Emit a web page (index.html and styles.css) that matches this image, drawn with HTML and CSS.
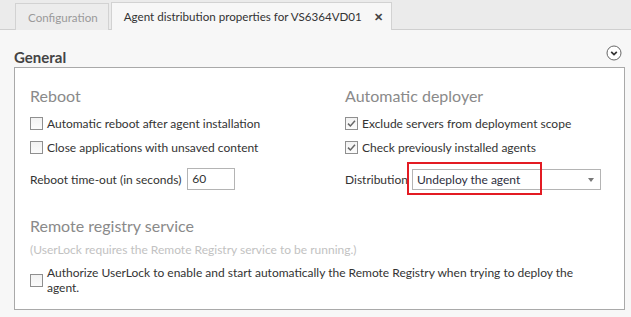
FILE: index.html
```html
<!DOCTYPE html>
<html lang="en">
  <head>
    <meta charset="UTF-8" />
    <title>Agent distribution properties</title>
    <link rel="stylesheet" href="styles.css">
  </head>
  <body>
    <div class="tabbar">
      <div class="tab">Configuration</div>
      <div class="tab active">
        Agent distribution properties for VS6364VD01
        <span class="close">&#x2715;</span>
      </div>
    </div>

    <div class="section-head">
      <h2>General</h2>
      <svg class="collapse" width="16" height="16" viewBox="0 0 16 16">
        <circle cx="8" cy="8" r="7" fill="#fff" stroke="#666" stroke-width="1" />
        <path d="M5.2 6.8 L8 9.6 L10.8 6.8" fill="none" stroke="#333" stroke-width="1.7" />
      </svg>
    </div>

    <div class="panel">
      <div class="columns">
        <div class="col">
          <h3>Reboot</h3>
          <label class="check-row"><span class="box"></span>Automatic reboot after agent installation</label>
          <label class="check-row"><span class="box"></span>Close applications with unsaved content</label>
          <div class="field-row">
            <span>Reboot time-out (in seconds)</span>
            <div class="textbox">60</div>
          </div>
        </div>
        <div class="col">
          <h3>Automatic deployer</h3>
          <label class="check-row">
            <span class="box">
              <svg width="11" height="11" viewBox="0 0 11 11"><path d="M2 5.6 L4.4 8 L9 2.8" fill="none" stroke="#666" stroke-width="1.5" /></svg>
            </span>Exclude servers from deployment scope
          </label>
          <label class="check-row">
            <span class="box">
              <svg width="11" height="11" viewBox="0 0 11 11"><path d="M2 5.6 L4.4 8 L9 2.8" fill="none" stroke="#666" stroke-width="1.5" /></svg>
            </span>Check previously installed agents
          </label>
          <div class="field-row">
            <span>Distribution</span>
            <div class="select-wrap">
              <div class="select">
                Undeploy the agent
                <span class="caret"></span>
              </div>
              <div class="highlight"></div>
            </div>
          </div>
        </div>
      </div>

      <h3 class="remote">Remote registry service</h3>
      <p class="note">(UserLock requires the Remote Registry service to be running.)</p>
      <label class="check-row wrap">
        <span class="box"></span>
        <span class="wrap-text">Authorize UserLock to enable and start automatically the Remote Registry when trying to deploy the agent.</span>
      </label>
    </div>
  </body>
</html>
```

FILE: styles.css
```css
body {
  margin: 0;
  background-color: #f7f7f7;
  font-family: "Lato", "Liberation Sans", sans-serif;
  font-size: 12px;
  color: #333;
}

.tabbar {
  display: flex;
  align-items: flex-end;
  height: 30px;
  padding-left: 15px;
  background-color: #ebebeb;
  border-bottom: 1px solid #cfcfcf;
  box-sizing: border-box;
}

.tab {
  display: flex;
  align-items: center;
  height: 27px;
  padding: 0 10px 0 12px;
  margin-bottom: -1px;
  margin-right: 2px;
  border: 1px solid #d2d2d2;
  border-bottom: none;
  background-color: #ececec;
  color: #9a9a9a;
  font-size: 11.6px;
  box-sizing: border-box;
}

.tab.active {
  height: 28px;
  padding-right: 8px;
  background-color: #f7f7f7;
  color: #333;
}

.close {
  margin-left: 12px;
  font-size: 11px;
  font-weight: bold;
  color: #444;
}

.section-head {
  display: flex;
  justify-content: space-between;
  align-items: center;
  padding: 17px 9px 0 14px;
  height: 20px;
}

.section-head h2 {
  margin: 0;
  font-size: 15px;
  font-weight: bold;
  color: #444;
}

.collapse {
  margin-top: -8px;
}

.panel {
  margin: 0 6px 0 14px;
  padding: 17px 15px 14px 15px;
  background-color: #fff;
  border: 1px solid #a9a9a9;
}

.columns {
  display: grid;
  grid-template-columns: 315px 1fr;
}

h3 {
  margin: 0 0 4px;
  font-size: 16px;
  font-weight: normal;
  line-height: 22px;
  color: #8a8a8a;
}

.check-row {
  display: flex;
  align-items: center;
  height: 24px;
}

.box {
  display: inline-flex;
  align-items: center;
  justify-content: center;
  width: 13px;
  height: 13px;
  margin-right: 4px;
  border: 1px solid #8f8f8f;
  background: linear-gradient(#f2f2f2, #fbfbfb);
  box-sizing: border-box;
  flex-shrink: 0;
}

.field-row {
  display: flex;
  align-items: center;
  margin-top: 9px;
  height: 22px;
}

.textbox {
  width: 48px;
  height: 22px;
  margin-left: 6px;
  padding-left: 4px;
  line-height: 20px;
  border: 1px solid #b4b4b4;
  box-sizing: border-box;
}

.select-wrap {
  position: relative;
  margin-left: 4px;
}

.select {
  position: relative;
  width: 189px;
  height: 21px;
  padding-left: 4px;
  line-height: 19px;
  border: 1px solid #b4b4b4;
  box-sizing: border-box;
  color: #2e2e3e;
  font-size: 12px;
}

.caret {
  position: absolute;
  right: 6px;
  top: 8px;
  border-left: 3.5px solid transparent;
  border-right: 3.5px solid transparent;
  border-top: 4px solid #777;
}

.highlight {
  position: absolute;
  left: -5px;
  top: -7px;
  width: 135px;
  height: 33px;
  border: 2px solid #e31b23;
  box-sizing: border-box;
}

.remote {
  margin-top: 25px;
  margin-bottom: 4px;
}

.note {
  margin: 0;
  line-height: 18px;
  color: #c2c2c2;
}

.check-row.wrap {
  height: auto;
  margin-top: 6px;
}

.wrap-text {
  max-width: 532px;
  line-height: 15px;
}
```
